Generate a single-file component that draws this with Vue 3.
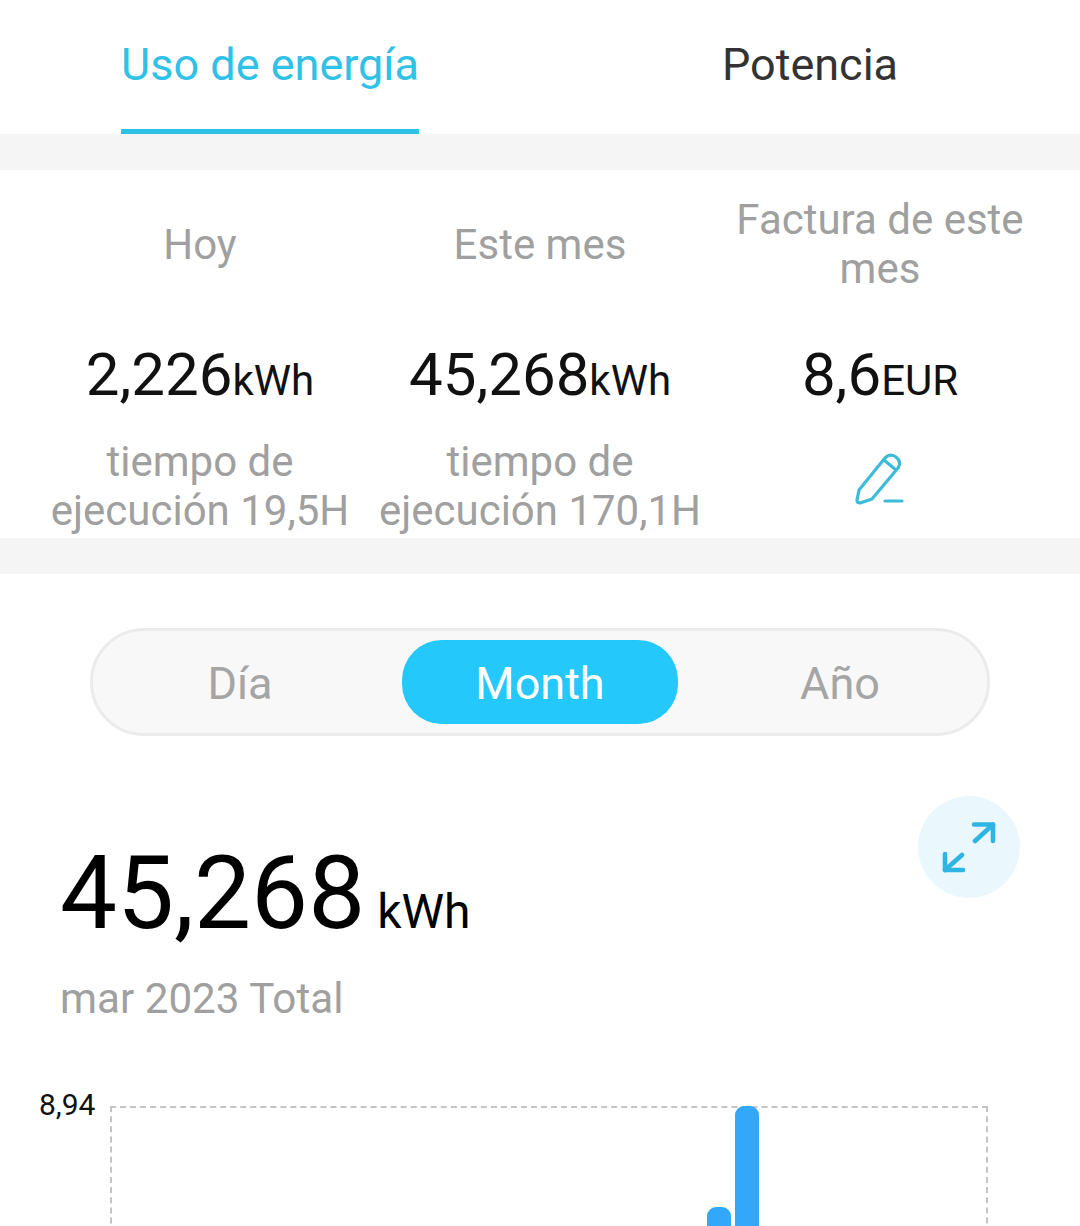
<script setup>
const stats = [
  { label: 'Hoy', value: '2,226', unit: 'kWh', sub: 'tiempo de ejecución 19,5H' },
  { label: 'Este mes', value: '45,268', unit: 'kWh', sub: 'tiempo de ejecución 170,1H' },
  { label: 'Factura de este mes', value: '8,6', unit: 'EUR' }
]
</script>

<template>
  <div class="page">
    <nav class="tabs">
      <div class="tab active"><span class="tab-label">Uso de energía</span></div>
      <div class="tab"><span class="tab-label">Potencia</span></div>
    </nav>
    <div class="band"></div>
    <section class="stats">
      <div v-for="s in stats" :key="s.label" class="stat">
        <div class="stat-label">{{ s.label }}</div>
        <div class="stat-value">{{ s.value }}<span class="stat-unit">{{ s.unit }}</span></div>
        <div v-if="s.sub" class="stat-sub">{{ s.sub }}</div>
        <svg v-else class="pencil" width="50" height="56" viewBox="0 0 50 56" fill="none" stroke="#3dbbd9" stroke-width="3.2" stroke-linecap="round" stroke-linejoin="round">
          <path d="M4 40 L30 8 Q35 3 41 7 Q47 12 43 18 L17 49 L5 53 Q2 53 2 50 Z" />
          <path d="M29 10 L41 20" />
          <path d="M30 51 H47" />
        </svg>
      </div>
    </section>
    <div class="band"></div>
    <section class="segment-wrap">
      <div class="segment">
        <div class="seg"><span class="seg-pill">Día</span></div>
        <div class="seg"><span class="seg-pill on">Month</span></div>
        <div class="seg"><span class="seg-pill">Año</span></div>
      </div>
    </section>
    <section class="total">
      <div class="total-text">
        <div class="total-value">45,268<span class="total-unit">kWh</span></div>
        <div class="total-date">mar 2023 Total</div>
      </div>
      <button class="expand" aria-label="expandir">
        <svg width="54" height="54" viewBox="0 0 54 54" fill="none" stroke="#2fb5e4" stroke-width="4.6" stroke-linecap="round" stroke-linejoin="round">
          <path d="M32 4.5 H51 V21" />
          <path d="M51 4.5 L33 21" />
          <path d="M3 34 V50 H21" />
          <path d="M3 50 L20 35" />
        </svg>
      </button>
    </section>
    <section class="chart">
      <div class="y-label">8,94</div>
      <div class="plot">
        <div class="bar low"></div>
        <div class="bar high"></div>
      </div>
    </section>
  </div>
</template>

<style>
html, body { margin: 0; background: #fff; }
</style>

<style scoped>
.page {
  width: 1080px;
  height: 1226px;
  overflow: hidden;
  background: #fff;
  font-family: Roboto, "Liberation Sans", sans-serif;
}
.tabs { display: flex; height: 134px; }
.tab {
  flex: 0 0 540px;
  display: flex;
  justify-content: center;
  font-size: 45px;
  color: #333;
}
.tab-label {
  display: block;
  height: 129px;
  line-height: 129px;
}
.tab.active { color: #2fc1e6; }
.tab.active .tab-label { border-bottom: 5px solid #2fc1e6; }
.band { height: 36px; background: #f5f5f5; }
.stats {
  display: grid;
  grid-template-columns: 340px 340px 340px;
  justify-content: center;
  height: 368px;
  box-sizing: border-box;
  padding: 0 30px;
}
.stat {
  display: flex;
  flex-direction: column;
  align-items: center;
  text-align: center;
}
.stat-label {
  display: flex;
  align-items: center;
  height: 148px;
  width: 320px;
  justify-content: center;
  font-size: 42px;
  line-height: 49px;
  color: #a0a0a0;
}
.stat-value {
  height: 64px;
  line-height: 64px;
  margin-top: 25px;
  font-size: 60px;
  color: #111;
  white-space: nowrap;
}
.stat-unit { font-size: 42px; }
.stat-sub {
  margin-top: 30px;
  font-size: 42px;
  line-height: 49px;
  color: #a0a0a0;
}
.pencil { margin-top: 43px; }
.segment-wrap {
  display: flex;
  justify-content: center;
  padding-top: 54px;
}
.segment {
  width: 900px;
  height: 108px;
  box-sizing: border-box;
  border: 3px solid #ebebeb;
  border-radius: 54px;
  background: #f8f8f8;
  display: grid;
  grid-template-columns: 300px 300px 300px;
  justify-content: center;
  align-items: center;
}
.seg {
  display: flex;
  justify-content: center;
  font-size: 45px;
  color: #a5a5a5;
}
.seg-pill {
  width: 276px;
  height: 84px;
  line-height: 87px;
  text-align: center;
}
.seg-pill.on {
  background: #24c8fb;
  border-radius: 40px;
  color: #fff;
}
.total {
  display: flex;
  justify-content: space-between;
  padding: 60px 60px 0 60px;
  height: 250px;
  box-sizing: border-box;
}
.total-value {
  margin-top: 39px;
  font-size: 101.5px;
  line-height: 118px;
  color: #000;
  white-space: nowrap;
}
.total-unit { font-size: 48px; margin-left: 12px; }
.total-date {
  margin-top: 3px;
  font-size: 42.2px;
  line-height: 50px;
  color: #a0a0a0;
}
.expand {
  width: 102px;
  height: 102px;
  padding: 0;
  border: 0;
  border-radius: 50%;
  background: #eaf8fe;
  display: flex;
  align-items: center;
  justify-content: center;
}
.chart {
  position: relative;
  height: 240px;
  padding-left: 110px;
  padding-top: 120px;
  box-sizing: border-box;
}
.y-label {
  position: absolute;
  left: 39px;
  top: 101px;
  font-size: 30px;
  line-height: 36px;
  color: #111;
}
.plot {
  position: relative;
  width: 878px;
  height: 300px;
  box-sizing: border-box;
  border: 2px dashed #c4c4c4;
}
.bar {
  position: absolute;
  width: 24px;
  background: #33a8fb;
  border-radius: 9px 9px 0 0;
}
.bar.low { left: 595px; top: 99px; height: 200px; }
.bar.high { left: 623px; top: -2px; height: 300px; }
</style>
